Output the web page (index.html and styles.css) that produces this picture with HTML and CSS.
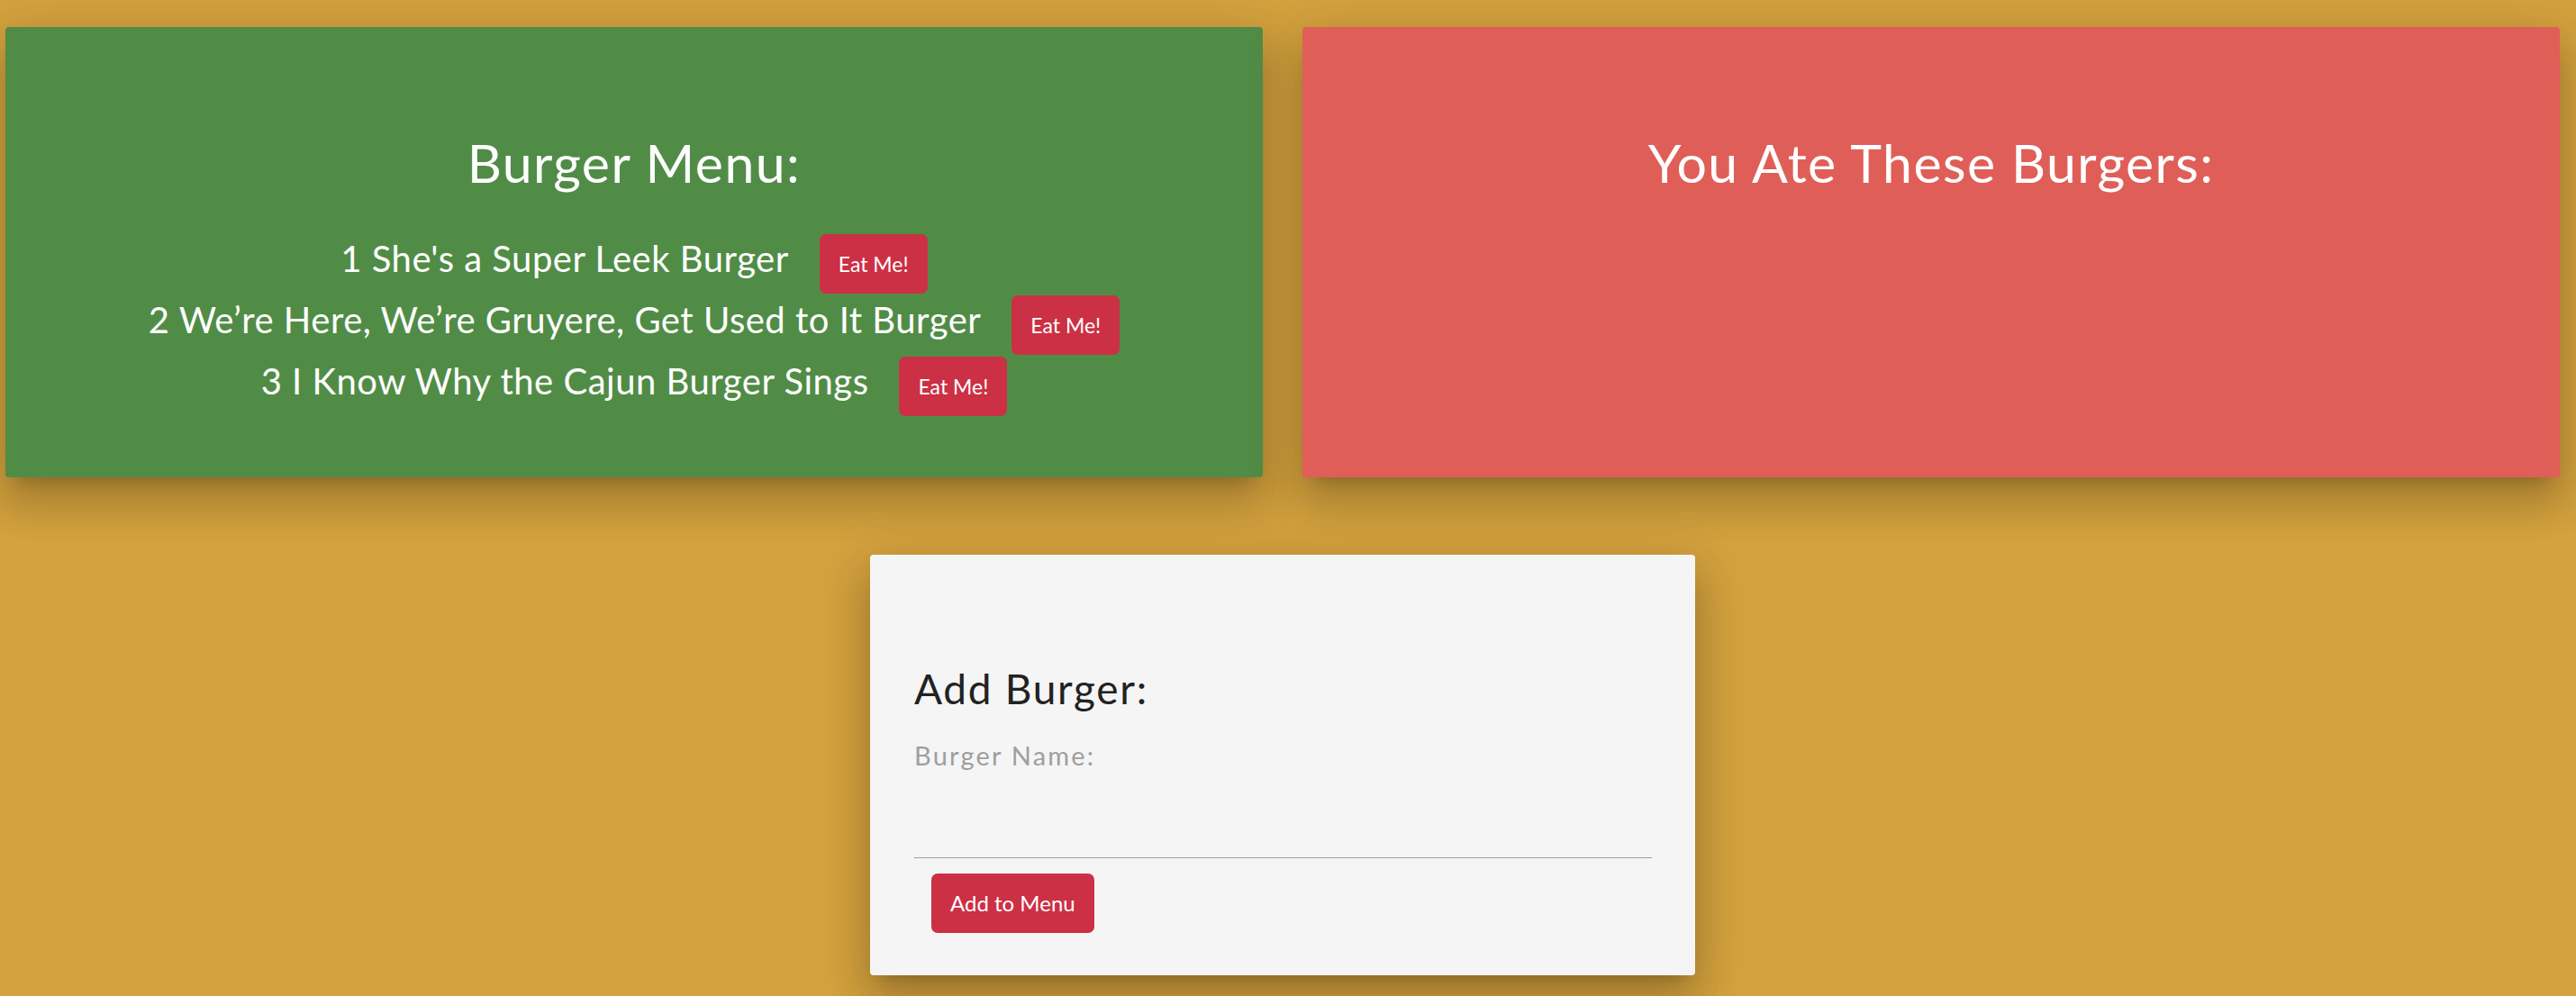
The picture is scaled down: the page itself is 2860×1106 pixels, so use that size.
FILE: index.html
```html
<!DOCTYPE html>
<html lang="en">
<head>
<meta charset="utf-8">
<title>Burger Menu</title>
<link rel="stylesheet" href="styles.css">
</head>
<body>
<main class="page">
  <section class="columns">
    <div class="card card-menu">
      <h2 class="card-title">Burger Menu:</h2>
      <ul class="burger-list">
        <li class="burger-row"><span class="burger-name">1 She's a Super Leek Burger</span><button class="btn">Eat Me!</button></li>
        <li class="burger-row"><span class="burger-name">2 We’re Here, We’re Gruyere, Get Used to It Burger</span><button class="btn">Eat Me!</button></li>
        <li class="burger-row"><span class="burger-name">3 I Know Why the Cajun Burger Sings</span><button class="btn">Eat Me!</button></li>
      </ul>
    </div>
    <div class="card card-eaten">
      <h2 class="card-title">You Ate These Burgers:</h2>
    </div>
  </section>
  <section class="card card-form">
    <h3 class="form-title">Add Burger:</h3>
    <label class="field-label" for="burger">Burger Name:</label>
    <div class="field"><input id="burger" class="field-input" type="text"></div>
    <button class="btn btn-add">Add to Menu</button>
  </section>
</main>
</body>
</html>
```
FILE: styles.css
```css
html {
  background: #d4a23e;
  overflow: hidden;
}
body {
  margin: 0;
  padding: 0;
  min-height: 100vh;
  font-family: "Lato", "Open Sans", sans-serif;
  font-weight: 400;
}
.page {
  padding: 30px 18px 0 6px;
}
.columns {
  display: grid;
  grid-template-columns: 1fr 1fr;
  column-gap: 44px;
}
.card {
  border-radius: 4px;
  box-shadow: 0 29px 44px 4px rgba(0,0,0,0.14), 0 11px 55px 9px rgba(0,0,0,0.12), 0 15px 18px -13px rgba(0,0,0,0.2);
  box-sizing: border-box;
}
.card-menu {
  background: #518c47;
  padding: 115px 0 68px;
  color: #fff;
  text-align: center;
}
.card-eaten {
  background: #df5f58;
  padding: 115px 0 68px;
  color: #fff;
  text-align: center;
}
.card-title {
  margin: 0 0 43px;
  font-size: 59px;
  line-height: 72px;
  font-weight: 400;
  letter-spacing: 1.4px;
}
.burger-list {
  list-style: none;
  margin: 0;
  padding: 0;
}
.burger-row {
  display: flex;
  justify-content: center;
  align-items: baseline;
  gap: 34px;
  margin-bottom: 2px;
}
.burger-row:last-child {
  margin-bottom: 0;
}
.burger-name {
  font-size: 40px;
  line-height: 48px;
  letter-spacing: 0.5px;
}
.btn {
  background: #cc3044;
  color: #fff;
  border: none;
  border-radius: 7px;
  height: 66px;
  line-height: 66px;
  padding: 0 21px;
  font-family: "Lato", "Open Sans", sans-serif;
  font-weight: 400;
  font-size: 23px;
  cursor: pointer;
}
.card-form {
  width: 916px;
  margin: 86px auto 0;
  background: #f5f5f5;
  padding: 121px 48px 47px 49px;
}
.form-title {
  margin: 0;
  font-size: 46px;
  line-height: 55px;
  font-weight: 400;
  color: #222;
  letter-spacing: 1.7px;
}
.field-label {
  display: block;
  margin-top: 29px;
  font-size: 29px;
  line-height: 35px;
  color: #9e9e9e;
  letter-spacing: 2.2px;
}
.field {
  border-bottom: 1px solid #9e9e9e;
  box-sizing: border-box;
  height: 97px;
}
.field-input {
  width: 100%;
  height: 100%;
  border: none;
  background: transparent;
  outline: none;
  font-size: 29px;
}
.btn-add {
  display: block;
  margin: 17px 0 0 19px;
  font-size: 24px;
}
```
